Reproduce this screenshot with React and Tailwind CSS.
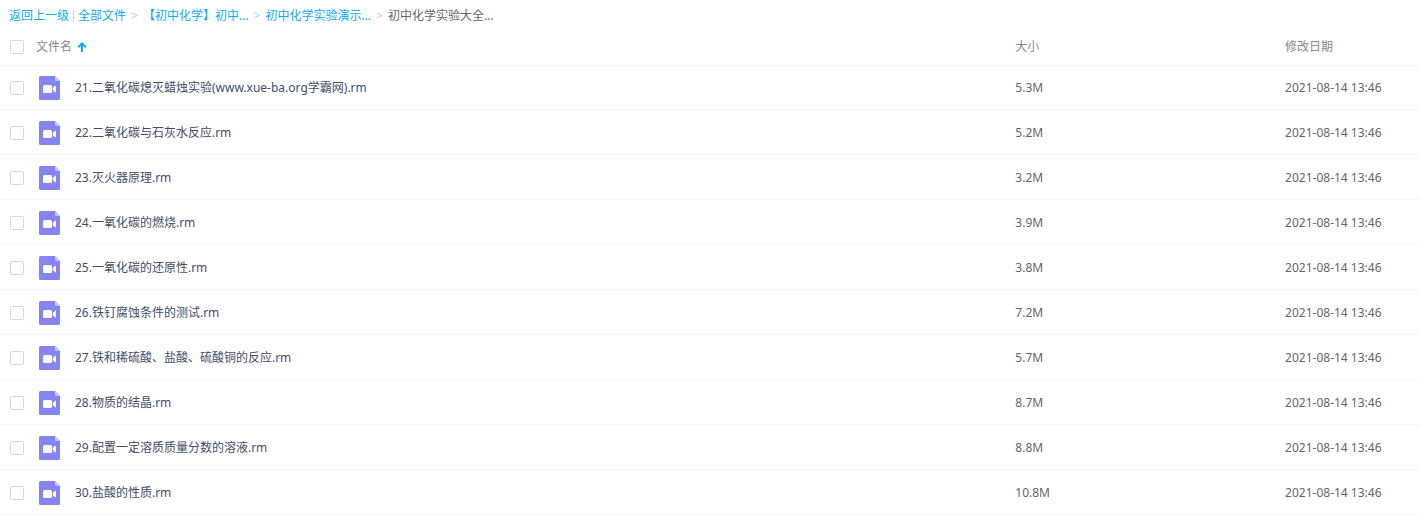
import React, { useState } from "react";

const FONT = "font-['Noto_Sans','Noto_Sans_CJK_SC',sans-serif]";

const CRUMBS = ["全部文件", "【初中化学】初中...", "初中化学实验演示..."];
const CURRENT = "初中化学实验大全...";

const FILES = [
  { name: "21.二氧化碳熄灭蜡烛实验(www.xue-ba.org学霸网).rm", size: "5.3M", date: "2021-08-14 13:46" },
  { name: "22.二氧化碳与石灰水反应.rm", size: "5.2M", date: "2021-08-14 13:46" },
  { name: "23.灭火器原理.rm", size: "3.2M", date: "2021-08-14 13:46" },
  { name: "24.一氧化碳的燃烧.rm", size: "3.9M", date: "2021-08-14 13:46" },
  { name: "25.一氧化碳的还原性.rm", size: "3.8M", date: "2021-08-14 13:46" },
  { name: "26.铁钉腐蚀条件的测试.rm", size: "7.2M", date: "2021-08-14 13:46" },
  { name: "27.铁和稀硫酸、盐酸、硫酸铜的反应.rm", size: "5.7M", date: "2021-08-14 13:46" },
  { name: "28.物质的结晶.rm", size: "8.7M", date: "2021-08-14 13:46" },
  { name: "29.配置一定溶质质量分数的溶液.rm", size: "8.8M", date: "2021-08-14 13:46" },
  { name: "30.盐酸的性质.rm", size: "10.8M", date: "2021-08-14 13:46" },
];

function VideoIcon() {
  return (
    <svg width="21" height="24" viewBox="0 0 21 24" className="shrink-0" aria-hidden="true">
      <path d="M1.5 0H16l5 5v17.5a1.5 1.5 0 0 1-1.5 1.5h-18A1.5 1.5 0 0 1 0 22.5v-21A1.5 1.5 0 0 1 1.5 0Z" fill="#8485f1" />
      <path d="M16 0l5 5h-3.5A1.5 1.5 0 0 1 16 3.5Z" fill="#c5c6f8" />
      <rect x="4" y="9" width="9" height="8" rx="1.5" fill="#fff" />
      <path d="M17 9.2v7.6L13.8 14.2v-2.4Z" fill="#fff" />
    </svg>
  );
}

function SortArrow() {
  return (
    <svg width="10" height="10" viewBox="0 0 10 10" className="shrink-0" aria-hidden="true">
      <path d="M5 1.2V10M1.2 5.2 5 1.4l3.8 3.8" fill="none" stroke="#09aaff" strokeWidth="2" />
    </svg>
  );
}

function Checkbox({ label, checked, onChange }) {
  return (
    <input
      type="checkbox"
      aria-label={label}
      checked={checked}
      onChange={onChange}
      className="size-3.5 shrink-0 appearance-none rounded-xs border border-[#d3d8e3] bg-white checked:border-[#09aaff] checked:bg-[#09aaff]"
    />
  );
}

export default function App() {
  const [selected, setSelected] = useState([]);
  const [ascending, setAscending] = useState(true);

  const rows = ascending ? FILES : [...FILES].reverse();
  const allSelected = selected.length === FILES.length;

  function toggle(name) {
    setSelected((prev) => (prev.includes(name) ? prev.filter((n) => n !== name) : [...prev, name]));
  }

  return (
    <div className={`bg-white text-xs text-[#666] ${FONT}`}>
      {/* Breadcrumb */}
      <nav className="flex h-7 items-center gap-[5px] whitespace-nowrap pl-[9px] pt-1">
        <div className="flex items-center gap-1">
          <a href="#back" className="text-[#09aaff]">返回上一级</a>
          <span className="h-3 w-px bg-[#c4dbfe]" />
          <a href="#all" className="text-[#09aaff]">{CRUMBS[0]}</a>
        </div>
        {CRUMBS.slice(1).map((crumb) => (
          <React.Fragment key={crumb}>
            <span className="text-[#b5cbf5]">&gt;</span>
            <a href="#folder" className="text-[#09aaff]">{crumb}</a>
          </React.Fragment>
        ))}
        <span className="text-[#b5cbf5]">&gt;</span>
        <span>{CURRENT}</span>
      </nav>

      {/* File list */}
      <table className="w-full table-fixed border-separate border-spacing-0 text-left">
        <thead className="text-[#888]">
          <tr className="h-[38px]">
            <th className="w-[71.5%] border-b border-[#f2f6fd] pl-2.5 pt-px font-normal">
              <div className="flex items-center gap-3">
                <Checkbox
                  label="全选"
                  checked={allSelected}
                  onChange={() => setSelected(allSelected ? [] : FILES.map((f) => f.name))}
                />
                <button type="button" onClick={() => setAscending(!ascending)} className="flex items-center gap-[5px]">
                  文件名
                  <SortArrow />
                </button>
              </div>
            </th>
            <th className="w-[19%] border-b border-[#f2f6fd] pt-px font-normal">大小</th>
            <th className="border-b border-[#f2f6fd] pt-px font-normal">修改日期</th>
          </tr>
        </thead>
        <tbody>
          {rows.map((file) => (
            <tr key={file.name} className="h-[45px] first:h-11 hover:bg-[#f4fbff]">
              <td className="border-b border-[#f2f6fd] pl-2.5 pt-px">
                <div className="flex items-center gap-[15px]">
                  <Checkbox
                    label={file.name}
                    checked={selected.includes(file.name)}
                    onChange={() => toggle(file.name)}
                  />
                  <VideoIcon />
                  <a href="#file" className="truncate text-[#424e67]">{file.name}</a>
                </div>
              </td>
              <td className="border-b border-[#f2f6fd] pt-px">{file.size}</td>
              <td className="border-b border-[#f2f6fd] pt-px">{file.date}</td>
            </tr>
          ))}
        </tbody>
      </table>
    </div>
  );
}
